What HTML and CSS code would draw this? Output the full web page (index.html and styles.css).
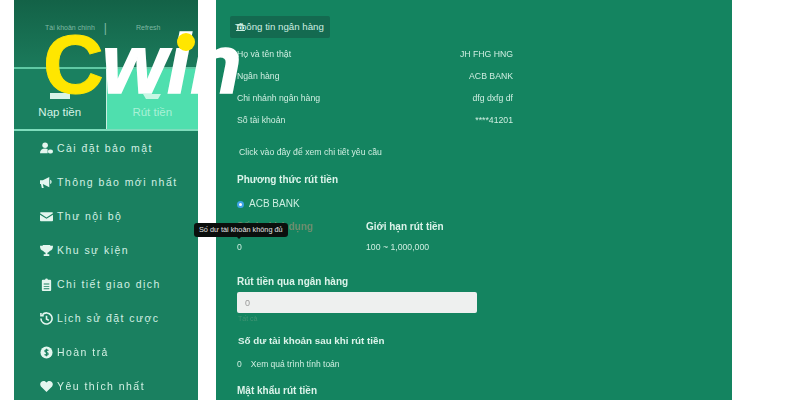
FILE: index.html
```html
<!DOCTYPE html>
<html lang="en">
<head>
  <meta charset="UTF-8" />
  <title>Cwin - Rút tiền</title>
  <link rel="stylesheet" href="styles.css">
</head>
<body>
  <div class="logo"><span class="logo-c">C</span><span class="logo-win">win</span><span class="logo-dot"></span></div>

  <div class="page">
    <aside class="sidebar">
      <div class="account"><span>Tài khoản chính</span><span class="sep">|</span><span class="refresh">Refresh</span></div>
      <div class="tabs">
        <div class="tab">
          <svg class="tab-icon" viewBox="0 0 20 10"><path d="M0 4h20v6H0z" fill="#d8f3e8"/></svg>
          <span>Nạp tiền</span>
        </div>
        <div class="tab active">
          <svg class="tab-icon" viewBox="0 0 20 10"><path d="M1 5h18l-3 5H4z" fill="#c8f7e4"/></svg>
          <span>Rút tiền</span>
        </div>
      </div>
      <nav class="menu">
        <a class="menu-item">
          <svg viewBox="0 0 14 14"><circle cx="5.5" cy="3.5" r="3"/><path d="M0 12c0-3 2-5 5.5-5 1 0 2 .2 2.7.6V12z"/><rect x="8.5" y="8" width="5.5" height="4.5" rx="2.2"/></svg>
          Cài đặt bảo mật
        </a>
        <a class="menu-item">
          <svg viewBox="0 0 14 14"><path d="M0 4.500h3L10 1v11L3 8.500l1 4.500H2L1 8.500H0z"/><path d="M11 4c2 .5 2 4 0 4.500z"/></svg>
          Thông báo mới nhất
        </a>
        <a class="menu-item">
          <svg viewBox="0 0 14 14"><path d="M1 2.500h12a1 1 0 0 1 1 1L7 8 0 3.500a1 1 0 0 1 1-1z"/><path d="M0 5l7 4.500L14 5v6a1 1 0 0 1-1 1H1a1 1 0 0 1-1-1z"/></svg>
          Thư nội bộ
        </a>
        <a class="menu-item">
          <svg viewBox="0 0 14 14"><path d="M3 1h8v1h3c0 3-1 5-3.500 5.500C10 8.500 9 9 8 9.300V11h2v2H4v-2h2V9.300C5 9 4 8.500 3.500 7.500 1 7 0 5 0 2h3z"/></svg>
          Khu sự kiện
        </a>
        <a class="menu-item">
          <svg viewBox="0 0 14 14"><path fill-rule="evenodd" d="M3 2h2.500a1.500 1.500 0 0 1 3 0H11a1 1 0 0 1 1 1v10a1 1 0 0 1-1 1H3a1 1 0 0 1-1-1V3a1 1 0 0 1 1-1zm1 4v1h6V6zm0 2.500v1h6v-1zm0 2.500v1h6v-1z"/></svg>
          Chi tiết giao dịch
        </a>
        <a class="menu-item">
          <svg class="stroke" viewBox="0 0 14 14"><path d="M2.500 3A6 6 0 1 1 1 7"/><path d="M7 4v3.500l2.500 1.500"/><path d="M1 1v3h3" /></svg>
          Lịch sử đặt cược
        </a>
        <a class="menu-item">
          <svg viewBox="0 0 14 14"><circle cx="7" cy="7" r="6.500"/><path class="cut" d="M9 5c-.5-1-3.500-1.300-3.800.3C5 7 9 6.800 8.800 8.700 8.500 10.200 5.500 10 5 9M7 3v8"/></svg>
          Hoàn trả
        </a>
        <a class="menu-item">
          <svg viewBox="0 0 14 14"><path d="M7 13L1 7C-1 4 1 1 4 1c1.300 0 2.300.7 3 1.700C7.700 1.700 8.700 1 10 1c3 0 5 3 3 6z"/></svg>
          Yêu thích nhất
        </a>
      </nav>
    </aside>

    <main class="content">
      <div class="badge">
        <svg class="badge-icon" viewBox="0 0 10 9"><path d="M5 0l5 3H0zM1 4h1.500v3H1zM4.200 4h1.600v3H4.200zM7.500 4H9v3H7.500zM0 8h10v1H0z"/></svg>
        Thông tin ngân hàng
      </div>
      <div class="info-rows">
        <div class="info-row"><span>Họ và tên thật</span><span>JH FHG HNG</span></div>
        <div class="info-row"><span>Ngân hàng</span><span>ACB BANK</span></div>
        <div class="info-row"><span>Chi nhánh ngân hàng</span><span>dfg dxfg df</span></div>
        <div class="info-row"><span>Số tài khoản</span><span>****41201</span></div>
      </div>
      <p class="click-note">Click vào đây để xem chi tiết yêu cầu</p>

      <h4 class="method-title">Phương thức rút tiền</h4>
      <label class="radio-row"><span class="radio"></span>ACB BANK</label>

      <div class="limits">
        <div class="limit-col">
          <h4 class="dim-title">Số dư khả dụng</h4>
          <div class="limit-value">0</div>
        </div>
        <div class="limit-col">
          <h4>Giới hạn rút tiền</h4>
          <div class="limit-value">100 ~ 1,000,000</div>
        </div>
      </div>

      <h4 class="amount-title">Rút tiền qua ngân hàng</h4>
      <input class="amount" type="text" value="0" readonly />
      <div class="amount-hint">Tất cả</div>

      <h4 class="after-title">Số dư tài khoản sau khi rút tiền</h4>
      <div class="after-row"><span>0</span><span>Xem quá trình tính toán</span></div>

      <h4 class="password-title">Mật khẩu rút tiền</h4>
    </main>
  </div>

  <div class="tooltip">Số dư tài khoản không đủ</div>
</body>
</html>
```

FILE: styles.css
```css
html, body {
  margin: 0;
  height: 400px;
  overflow: hidden;
  background: #fff;
}
body {
  font-family: 'Liberation Sans', Arial, sans-serif;
  color: #cfeee1;
  position: relative;
}
h4 {
  margin: 0;
  font-size: 10px;
  line-height: 14px;
  font-weight: 700;
  color: #dcf3ea;
}
.page {
  display: flex;
  height: 400px;
  padding-left: 14px;
  gap: 18px;
  filter: blur(0.4px);
}

/* sidebar */
.sidebar {
  width: 184px;
  background: #1a8060;
  flex: none;
}
.account {
  height: 69px;
  box-sizing: border-box;
  padding: 24px 0 0 31px;
  display: flex;
  font-size: 7px;
  color: #7fb8a2;
  background: linear-gradient(#136247, #1b7a5b);
  border-bottom: 2px solid #5fc9a4;
}
.sep {
  margin-left: 9px;
  font-size: 12px;
  line-height: 8px;
}
.refresh {
  margin-left: 29px;
}
.tabs {
  display: flex;
  height: 60px;
  border-bottom: 2px solid #7fdcbc;
}
.tab {
  flex: 1;
  display: flex;
  flex-direction: column;
  align-items: center;
  justify-content: flex-end;
  padding-bottom: 11px;
  font-size: 11.5px;
  color: #d5f2e6;
}
.tab.active {
  background: #4fdfae;
  color: #a9f1d6;
  border-left: 1px solid #c9efe0;
}
.tab-icon {
  width: 20px;
  height: 10px;
  margin-bottom: 7px;
}
.menu {
  display: flex;
  flex-direction: column;
  padding-left: 26px;
}
.menu-item {
  display: flex;
  align-items: center;
  gap: 4px;
  height: 34px;
  font-size: 10.5px;
  letter-spacing: 1.45px;
  color: #d3f0e4;
}
.menu-item svg {
  width: 13px;
  height: 13px;
  flex: none;
  fill: #e4f6ef;
}
.menu-item svg.stroke {
  fill: none;
  stroke: #e4f6ef;
  stroke-width: 1.7;
}
.menu-item .cut {
  fill: none;
  stroke: #1a8060;
  stroke-width: 1.3;
}

/* main panel */
.content {
  width: 516px;
  flex: none;
  box-sizing: border-box;
  background: #148460;
  padding: 16px 0 0 21px;
  font-size: 8.7px;
}
.badge {
  position: relative;
  display: inline-block;
  margin-left: -7px;
  padding: 0 6px 0 5px;
  height: 22px;
  line-height: 22px;
  font-size: 9.7px;
  background: #146a50;
  border-radius: 2px;
}
.badge-icon {
  position: absolute;
  left: 6px;
  top: 7px;
  width: 9px;
  height: 8px;
  fill: #cfeee1;
}
.info-rows {
  width: 276px;
  margin-top: 5px;
}
.info-row {
  display: flex;
  justify-content: space-between;
  height: 22px;
  line-height: 22px;
}
.click-note {
  margin: 15px 0 0 2px;
  line-height: 12px;
}
.method-title {
  margin-top: 15px;
}
.radio-row {
  display: flex;
  align-items: center;
  gap: 5px;
  margin-top: 10px;
  font-size: 10px;
  line-height: 14px;
  color: #cdeee1;
}
.radio {
  width: 3px;
  height: 3px;
  border: 2px solid #3fa4e8;
  background: #fff;
  border-radius: 50%;
}
.limits {
  display: flex;
  margin-top: 9px;
}
.limit-col {
  width: 129px;
}
.dim-title {
  color: #6e8d6e;
}
.limit-value {
  margin-top: 7px;
  line-height: 12px;
}
.amount-title {
  margin-top: 22px;
}
.amount {
  display: block;
  box-sizing: border-box;
  width: 240px;
  height: 21px;
  margin-top: 3px;
  padding: 0 8px;
  border: 0;
  border-radius: 2px;
  background: #eef0ef;
  color: #999;
  font: 9px 'Liberation Sans', Arial, sans-serif;
}
.amount-hint {
  margin-top: 1px;
  padding-left: 1px;
  font-size: 7px;
  line-height: 10px;
  color: #3f9473;
}
.after-title {
  margin: 10px 0 0 1px;
  font-size: 9.8px;
}
.after-row {
  display: flex;
  gap: 9px;
  margin-top: 10px;
  font-size: 8.5px;
  line-height: 12px;
}
.password-title {
  margin-top: 14px;
}

/* overlays */
.tooltip {
  position: absolute;
  left: 194px;
  top: 223px;
  padding: 0 5px;
  height: 14px;
  line-height: 14px;
  font-size: 7.3px;
  color: #e6e6e6;
  background: #0b0f0d;
  border-radius: 3px;
}
.tooltip::after {
  content: "";
  position: absolute;
  left: 43px;
  top: 14px;
  border: 2px solid transparent;
  border-top-color: #0b0f0d;
}
.logo {
  position: absolute;
  left: 43px;
  top: 33px;
  display: flex;
  font-weight: 700;
  z-index: 2;
  line-height: 62px;
  white-space: nowrap;
}
.logo-c {
  font-size: 84px;
  color: #ffe600;
  -webkit-text-stroke: 1px #ffe600;
}
.logo-win {
  font-size: 84px;
  font-style: italic;
  color: #fff;
  -webkit-text-stroke: 1.5px #fff;
  margin-left: -2px;
}
.logo-dot {
  position: absolute;
  left: 134px;
  top: 0;
  width: 18px;
  height: 18px;
  border-radius: 50%;
  background: #ffe600;
}
```
